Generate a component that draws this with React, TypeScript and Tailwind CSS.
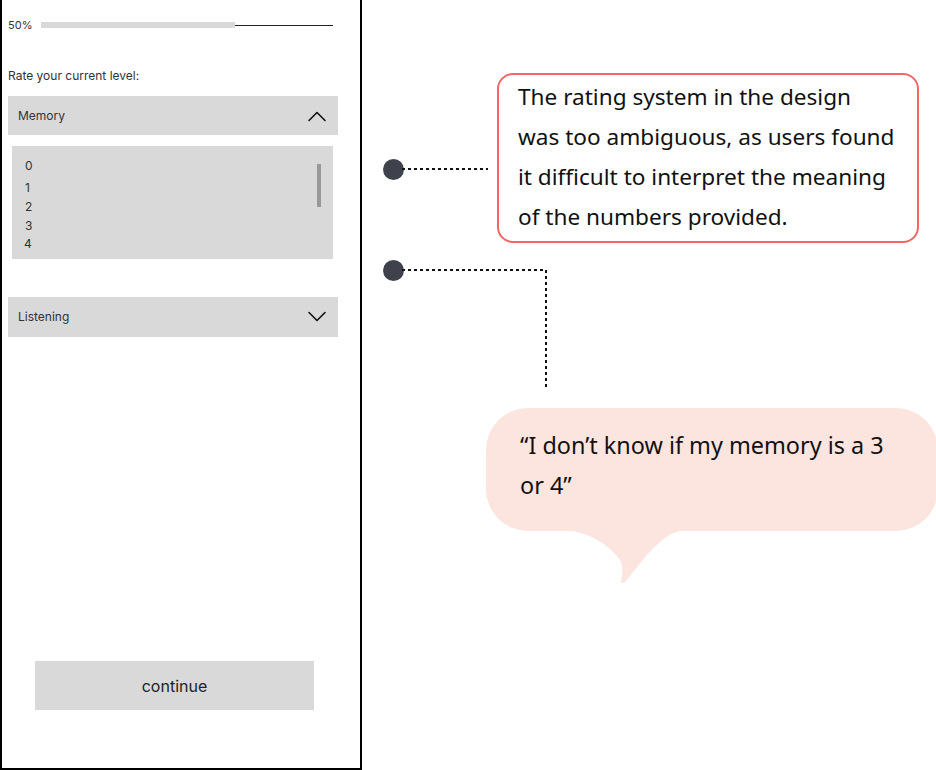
import React from "react";

function Chevron({ up }: { up?: boolean }) {
  return (
    <svg width="20" height="12" viewBox="0 0 20 12" fill="none">
      <path
        d={up ? "M2 10.5 L10 2.5 L18 10.5" : "M2 1.5 L10 9.5 L18 1.5"}
        stroke="#111"
        strokeWidth="1.6"
        strokeLinecap="round"
        strokeLinejoin="round"
      />
    </svg>
  );
}

function PhoneScreen() {
  return (
    <div className="w-[362px] h-[770px] shrink-0 border-l-2 border-r-2 border-b-2 border-black flex flex-col font-['Inter',sans-serif] text-[#333]">
      {/* progress */}
      <div className="flex items-center pl-[6px] pt-[16px] h-[34px]">
        <span className="text-[11px] w-[33px]">50%</span>
        <div className="h-[6px] w-[194px] bg-[#d9d9d9]" />
        <div className="h-px w-[98px] bg-[#222]" />
      </div>

      <p className="text-[12px] pl-[6px] mt-[34px] leading-[16px]">Rate your current level:</p>

      {/* memory accordion */}
      <div className="mt-[12px] ml-[6px] w-[330px] h-[39px] bg-[#d9d9d9] flex items-center justify-between pl-[10px] pr-[11px]">
        <span className="text-[12px]">Memory</span>
        <Chevron up />
      </div>

      <div className="mt-[11px] ml-[10px] w-[321px] h-[113px] bg-[#d9d9d9] flex justify-between pl-[13px] pr-[12px] pt-[10px]">
        <div className="flex flex-col text-[12px] leading-[19px]">
          <span>0</span>
          <span className="mt-[3px]">1</span>
          <span>2</span>
          <span>3</span>
          <span className="-ml-[1px] -mt-[1px]">4</span>
        </div>
        <div className="w-[4px] h-[43px] mt-[8px] bg-[#999]" />
      </div>

      {/* listening accordion */}
      <div className="mt-[38px] ml-[6px] w-[330px] h-[40px] bg-[#d9d9d9] flex items-center justify-between pl-[10px] pr-[11px]">
        <span className="text-[12px]">Listening</span>
        <Chevron />
      </div>

      <div className="flex-1" />

      <button className="ml-[33px] mb-[58px] w-[279px] h-[49px] bg-[#d9d9d9] text-[16px] text-[#222] flex items-center justify-center">
        continue
      </button>
    </div>
  );
}

function Dot() {
  return <div className="w-[21px] h-[21px] rounded-full bg-[#3f414d]" />;
}

function Annotations() {
  return (
    <div className="relative flex-1 h-[770px] font-['Noto_Sans',sans-serif] text-[#111]">
      {/* first connector */}
      <div className="absolute left-[21px] top-[159px]">
        <Dot />
      </div>
      <svg className="absolute left-[40px] top-[164px]" width="86" height="10">
        <line x1="0" y1="5" x2="86" y2="5" stroke="#111" strokeWidth="2" strokeDasharray="3 3" />
      </svg>

      {/* second connector */}
      <div className="absolute left-[21px] top-[260px]">
        <Dot />
      </div>
      <svg className="absolute left-[40px] top-[265px]" width="146" height="124">
        <path d="M0 5 H144 V122" fill="none" stroke="#111" strokeWidth="2" strokeDasharray="3 3" />
      </svg>

      <div className="flex flex-col pt-[73px]">
        {/* finding box */}
        <div className="ml-[135px] w-[422px] h-[170px] border-2 border-[#f26666] rounded-[16px] pl-[19px] pt-[2px] text-[22.6px] leading-[40px]">
          <div>The rating system in the design</div>
          <div>was too ambiguous, as users found</div>
          <div>it difficult to interpret the meaning</div>
          <div>of the numbers provided.</div>
        </div>

        {/* quote bubble */}
        <div className="relative mt-[165px] ml-[124px] w-[452px] h-[123px] rounded-[42px] bg-[#fce5df] pl-[34px] pt-[17px] text-[23.4px] leading-[40px]">
          <div>“I don’t know if my memory is a 3</div>
          <div>or 4”</div>
          <svg className="absolute left-[74px] top-[122px]" width="130" height="54" viewBox="0 0 130 54">
            <path
              d="M0 0 C30 0 52 18 60 30 C64 37 62 46 61 52 C62 54 64 53 66 51 C74 42 84 26 100 12 C110 3 118 0 130 0 Z"
              fill="#fce5df"
            />
          </svg>
        </div>
      </div>
    </div>
  );
}

export default function App() {
  return (
    <div className="w-[936px] h-[770px] bg-white flex overflow-hidden">
      <PhoneScreen />
      <Annotations />
    </div>
  );
}
